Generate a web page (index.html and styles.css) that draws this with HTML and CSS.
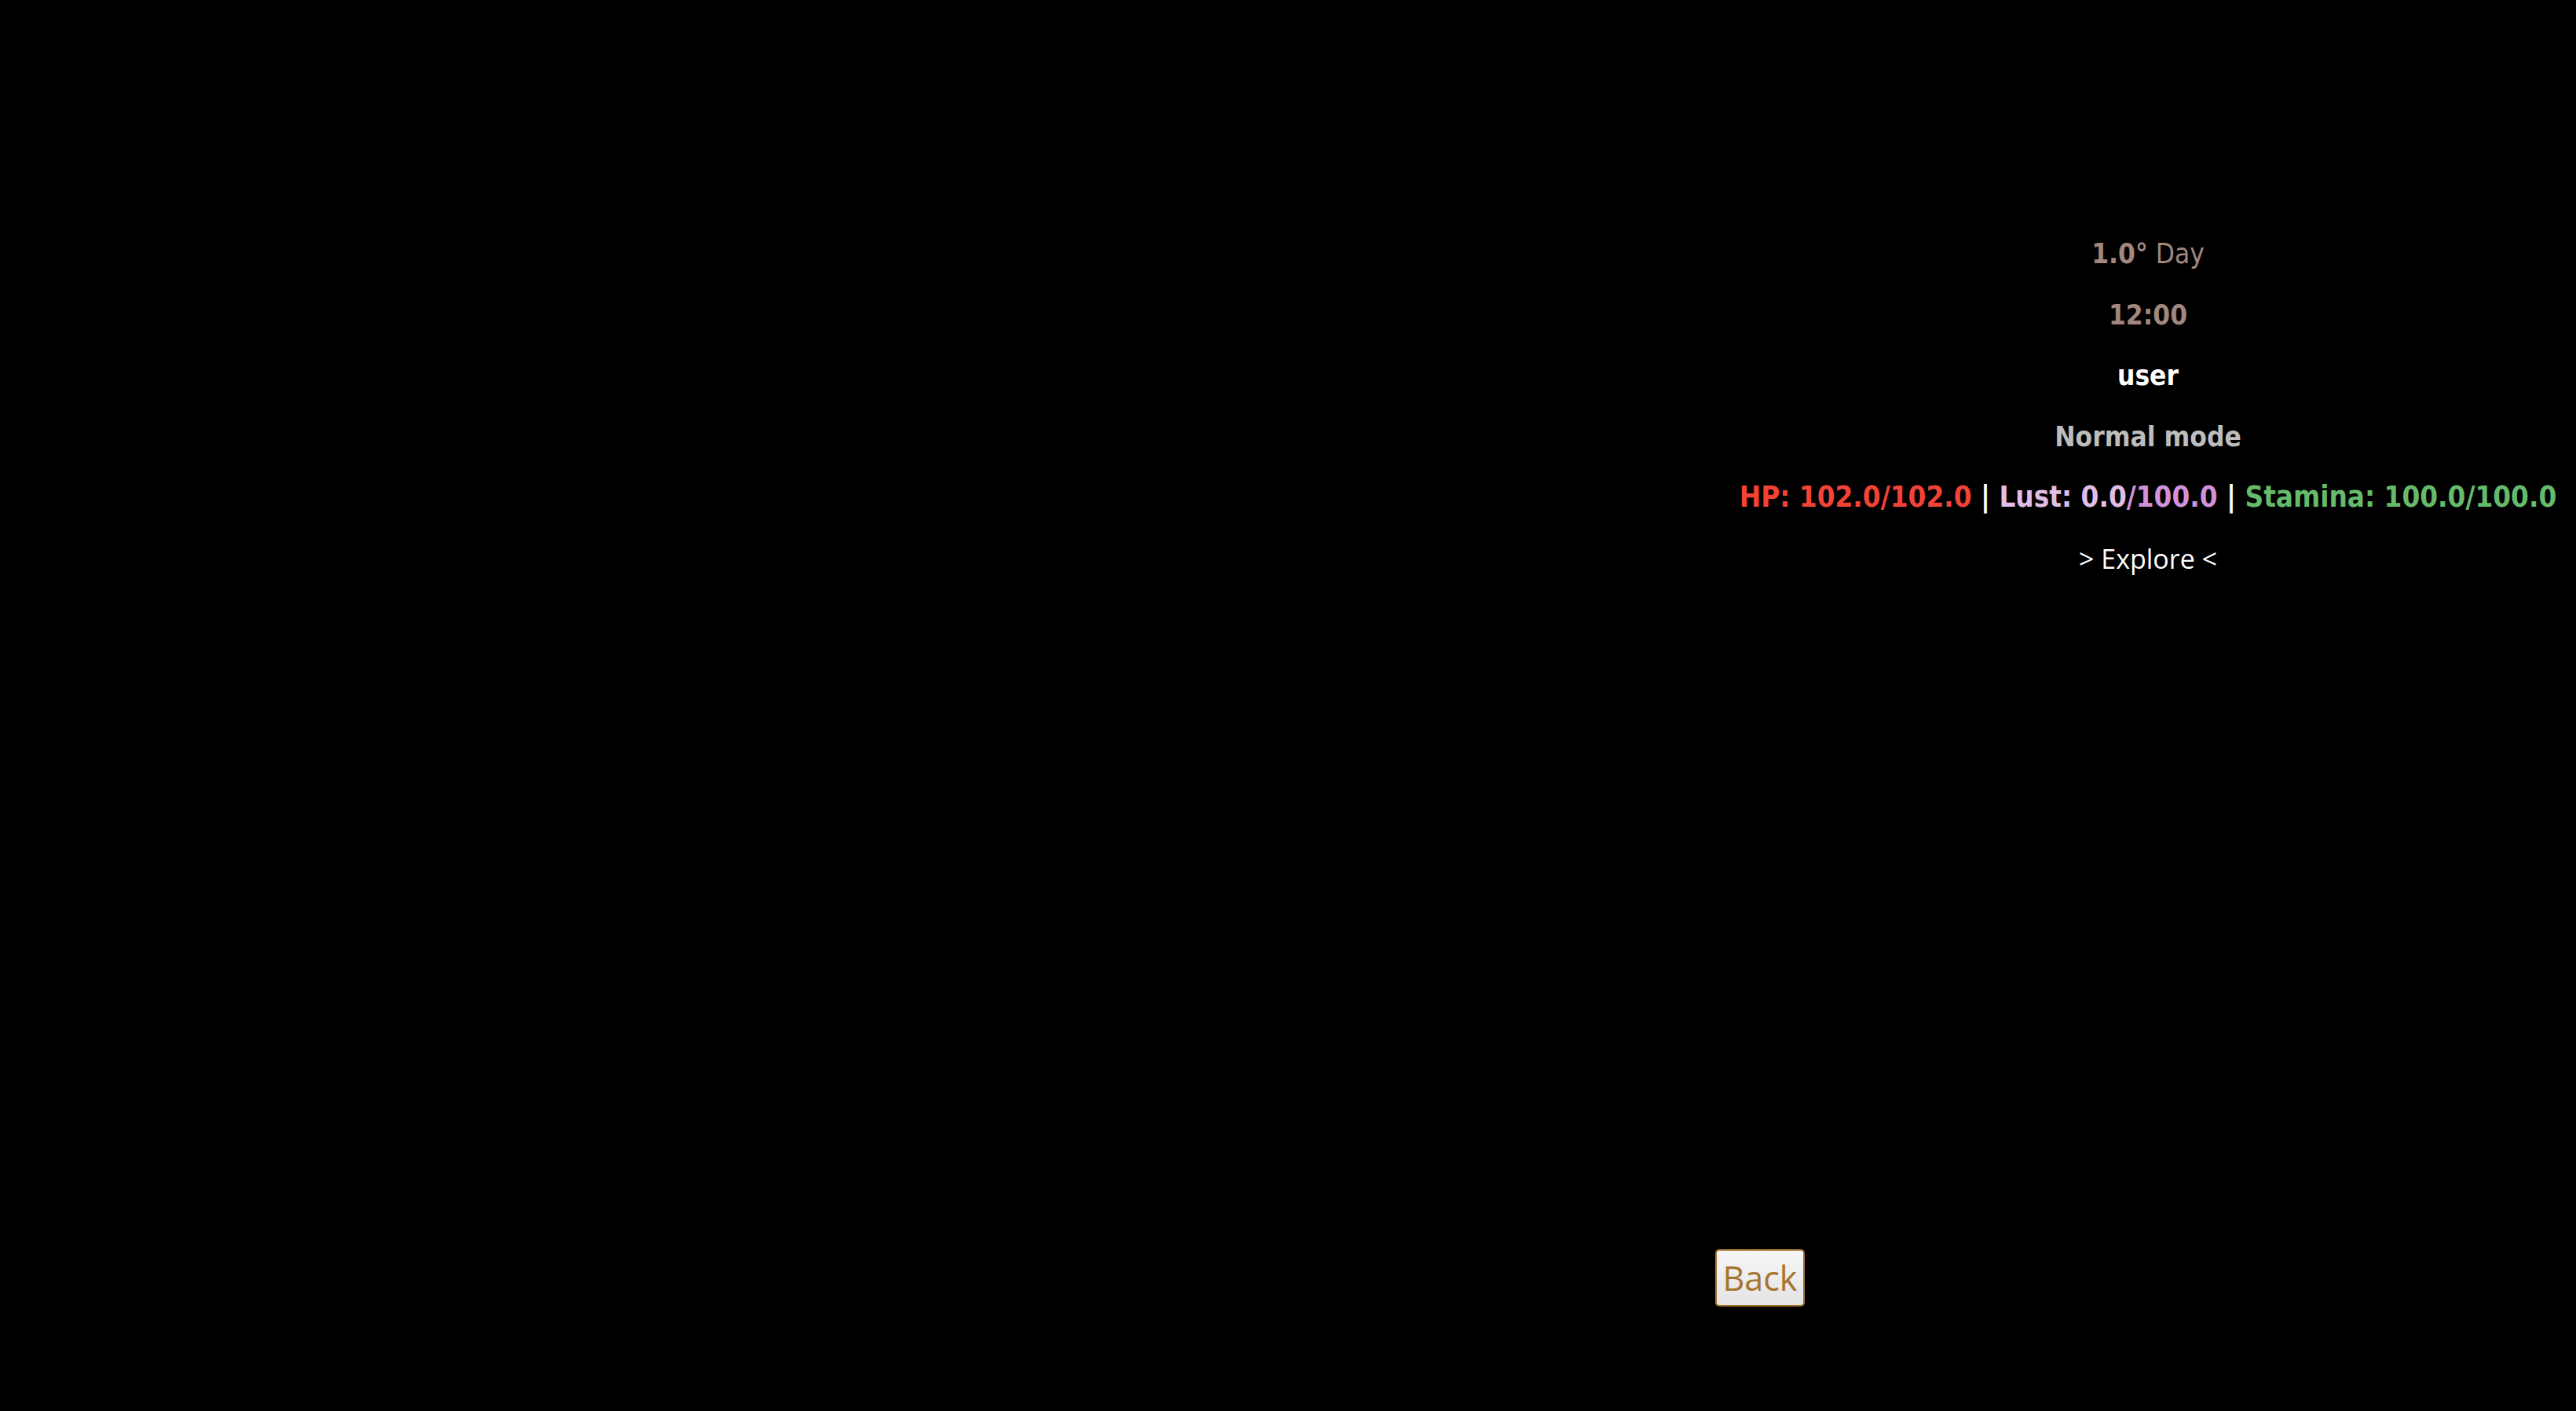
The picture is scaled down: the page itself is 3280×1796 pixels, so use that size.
FILE: index.html
```html
<!DOCTYPE html>
<html lang="en">
<head>
<meta charset="UTF-8">
<meta name="viewport" content="width=device-width, initial-scale=1.0">
<title>Explore</title>
<link rel="stylesheet" href="styles.css">
</head>
<body>

<div class="layout">
  <div class="scene"></div>

  <div class="side">
    <div class="status">
      <div class="line date"><b>1.0°</b> Day</div>
      <div class="line date"><b>12:00</b></div>
      <div class="line name"><b>user</b></div>
      <div class="line mode"><b>Normal mode</b></div>
      <div class="line stats">
        <span class="hp">HP: 102.0/102.0</span>
        <span class="sep">|</span>
        <span class="lust">Lust: 0.0<span class="lust-max">/100.0</span></span>
        <span class="sep">|</span>
        <span class="stamina">Stamina: 100.0/100.0</span>
      </div>
      <div class="line place">&gt; Explore &lt;</div>
    </div>

    <div class="actions">
      <button class="btn">Back</button>
    </div>
  </div>
</div>

</body>
</html>
```

FILE: styles.css
```css
body {
  margin: 0;
  background-color: #000;
  color: #fff;
  font-family: "DejaVu Sans", Verdana, sans-serif;
}

.layout {
  display: flex;
  height: 100vh;
}

.scene {
  width: 2184px;
}

.side {
  flex: 1;
  display: flex;
  flex-direction: column;
  padding-bottom: 133px;
}

.status {
  padding-top: 304px;
  padding-left: 6px;
  text-align: center;
  font-size: 35px;
  font-stretch: condensed;
}

.line {
  line-height: 38px;
  margin-bottom: 39.5px;
}

.line b {
  font-weight: bold;
}

.date {
  color: #a1887f;
}

.name {
  color: #fff;
}

.mode {
  color: #bdbdbd;
}

.stats {
  font-size: 36.5px;
  font-weight: bold;
  white-space: nowrap;
}

.hp {
  color: #f44336;
}

.sep {
  color: #fff;
}

.lust {
  color: #e1bee7;
}

.lust-max {
  color: #ce93d8;
}

.stamina {
  color: #66bb6a;
}

.place {
  font-family: "Open Sans", sans-serif;
  font-stretch: normal;
  font-size: 34px;
  color: #fff;
}

.actions {
  margin-top: auto;
}

.btn {
  width: 114px;
  height: 73px;
  padding: 0;
  font-family: "Open Sans", sans-serif;
  font-size: 43px;
  color: #a5742e;
  background: linear-gradient(#f5f5f5, #e4e4e4);
  border: 2px solid #a5742e;
  border-radius: 5px;
  cursor: pointer;
}
```
